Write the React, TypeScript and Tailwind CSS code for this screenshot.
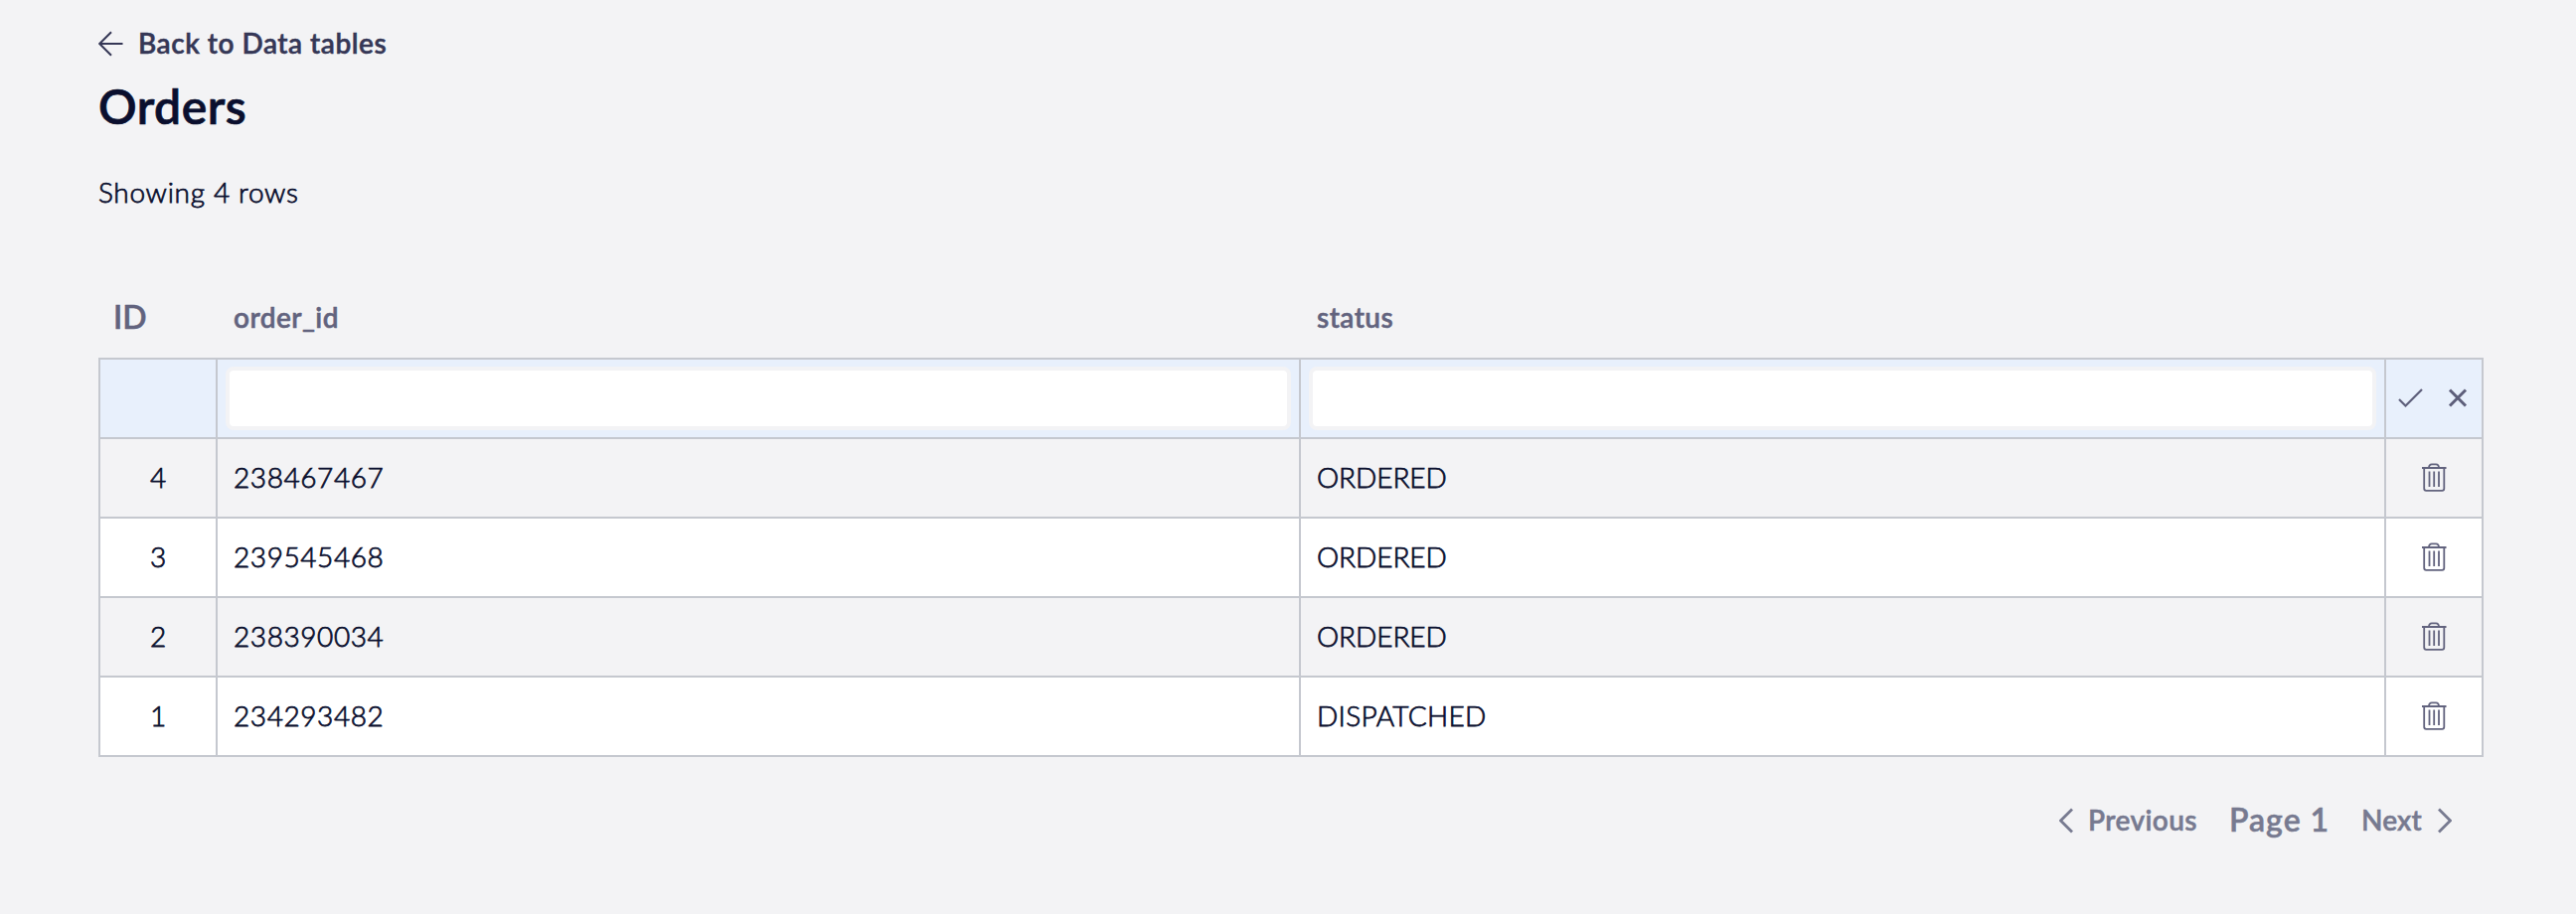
import React from 'react';

type Order = { id: number; orderId: string; status: string };

const orders: Order[] = [
  { id: 4, orderId: '238467467', status: 'ORDERED' },
  { id: 3, orderId: '239545468', status: 'ORDERED' },
  { id: 2, orderId: '238390034', status: 'ORDERED' },
  { id: 1, orderId: '234293482', status: 'DISPATCHED' },
];

const ROW = 'grid grid-cols-[118px_1090px_1092px_98px]';
const CELL = 'flex h-20 items-center border-r-2 border-b-2 border-[#c5c8cf]';
const LIGHT = 'font-light [-webkit-text-stroke:0.75px_#0a0f2e]';
const STRONG = 'font-semibold [-webkit-text-stroke:0.5px_currentColor]';

function TrashIcon() {
  return (
    <svg className="h-8 w-8" viewBox="0 0 32 32" fill="none" stroke="#62637e" strokeWidth="1.8">
      <path d="M4 8H28.500M6.200 8V28.800Q6.200 30.800 8.200 30.800H24.300Q26.300 30.800 26.300 28.800V8" />
      <path d="M11 8C11 5.4 12 4.300 14 4.300H18C20 4.300 21 5.4 21 8M11.500 11.500V27M16.200 11.500V27M21 11.500V27" />
    </svg>
  );
}

function InputBox() {
  return <input className="h-16 w-full rounded-lg border-4 border-[#f3f3f5] bg-white outline-none" />;
}

export default function App() {
  return (
    <div className="flex h-[920px] w-[2592px] flex-col bg-[#f3f3f5] pl-[99px] font-['Lato',sans-serif] text-[28px] text-[#0a0f2e]">
      <a className={`mt-[25px] flex h-9 items-center tracking-[0.52px] text-[#353756] ${STRONG}`}>
        <svg className="mt-px h-[26px] w-[26px]" viewBox="0 0 26 26" fill="none" stroke="#353756" strokeWidth="2">
          <path d="M24.500 13H1.500M13 1.200L1.200 13L13 24.800" />
        </svg>
        <span className="ml-[14px] leading-9">Back to Data tables</span>
      </a>
      <h1 className="mt-4 h-[60px] text-[48px] leading-[60px] font-semibold tracking-[0.5px] [-webkit-text-stroke:0.7px_currentColor]">Orders</h1>
      <p className={`mt-[38px] h-9 leading-9 tracking-[0.68px] ${LIGHT}`}>Showing 4 rows</p>

      <div className="mt-[77px] w-[2400px]">
        <div className={`grid h-[72px] grid-cols-[118px_1090px_1194px] pl-0.5 text-[#62637e] ${STRONG}`}>
          <span className="pl-[13px] text-[32px] leading-[62px]">ID</span>
          <span className="pl-4 leading-[63px] tracking-[0.42px]">order_id</span>
          <span className="pl-4 leading-[63px] tracking-[0.44px]">status</span>
        </div>
        <div className="border-t-2 border-l-2 border-[#c5c8cf]">
          <div className={`${ROW} bg-[#e8f0fc]`}>
            <div className={CELL} />
            <div className={`${CELL} px-2`}><InputBox /></div>
            <div className={`${CELL} px-2`}><InputBox /></div>
            <div className={CELL}>
              <svg className="h-11 w-24" viewBox="0 0 96 44" fill="none" stroke="#5d5e7a" strokeWidth="2.200">
                <path d="M13 23L19.500 29.500L36 13" />
                <path d="M64 13.500L80 29.500M80 13.500L64 29.500" strokeWidth="3" />
              </svg>
            </div>
          </div>
          {orders.map((order) => (
            <div key={order.id} className={`${ROW} ${LIGHT} odd:bg-white even:bg-[#f3f3f5]`}>
              <div className={`${CELL} justify-center pb-[3px]`}>{order.id}</div>
              <div className={`${CELL} pb-[3px] pl-4 tracking-[0.58px]`}>{order.orderId}</div>
              <div className={`${CELL} pb-[3px] pl-4 ${order.status === 'ORDERED' ? 'tracking-[-0.06px]' : 'tracking-[0.32px]'}`}>{order.status}</div>
              <div className={`${CELL} justify-center pb-1`}><TrashIcon /></div>
            </div>
          ))}
        </div>
      </div>

      <div className={`mt-[43px] flex h-10 items-center pl-[1973px] text-[#777a90] ${STRONG}`}>
        <svg className="mt-0.5 h-[26px] w-[14px]" viewBox="0 0 14 26" fill="none" stroke="#777a90" strokeWidth="2.800">
          <path d="M13 1.500L1.500 13L13 24.500" />
        </svg>
        <span className="ml-[15px] w-[142px] leading-10 tracking-[0.4px]">Previous</span>
        <span className="w-[133px] text-[32px] leading-10 tracking-[1px]">Page 1</span>
        <span className="w-[77px] leading-10 tracking-[0.15px]">Next</span>
        <svg className="mt-0.5 h-[26px] w-[14px]" viewBox="0 0 14 26" fill="none" stroke="#777a90" strokeWidth="2.800">
          <path d="M1 1.500L12.500 13L1 24.500" />
        </svg>
      </div>
    </div>
  );
}
